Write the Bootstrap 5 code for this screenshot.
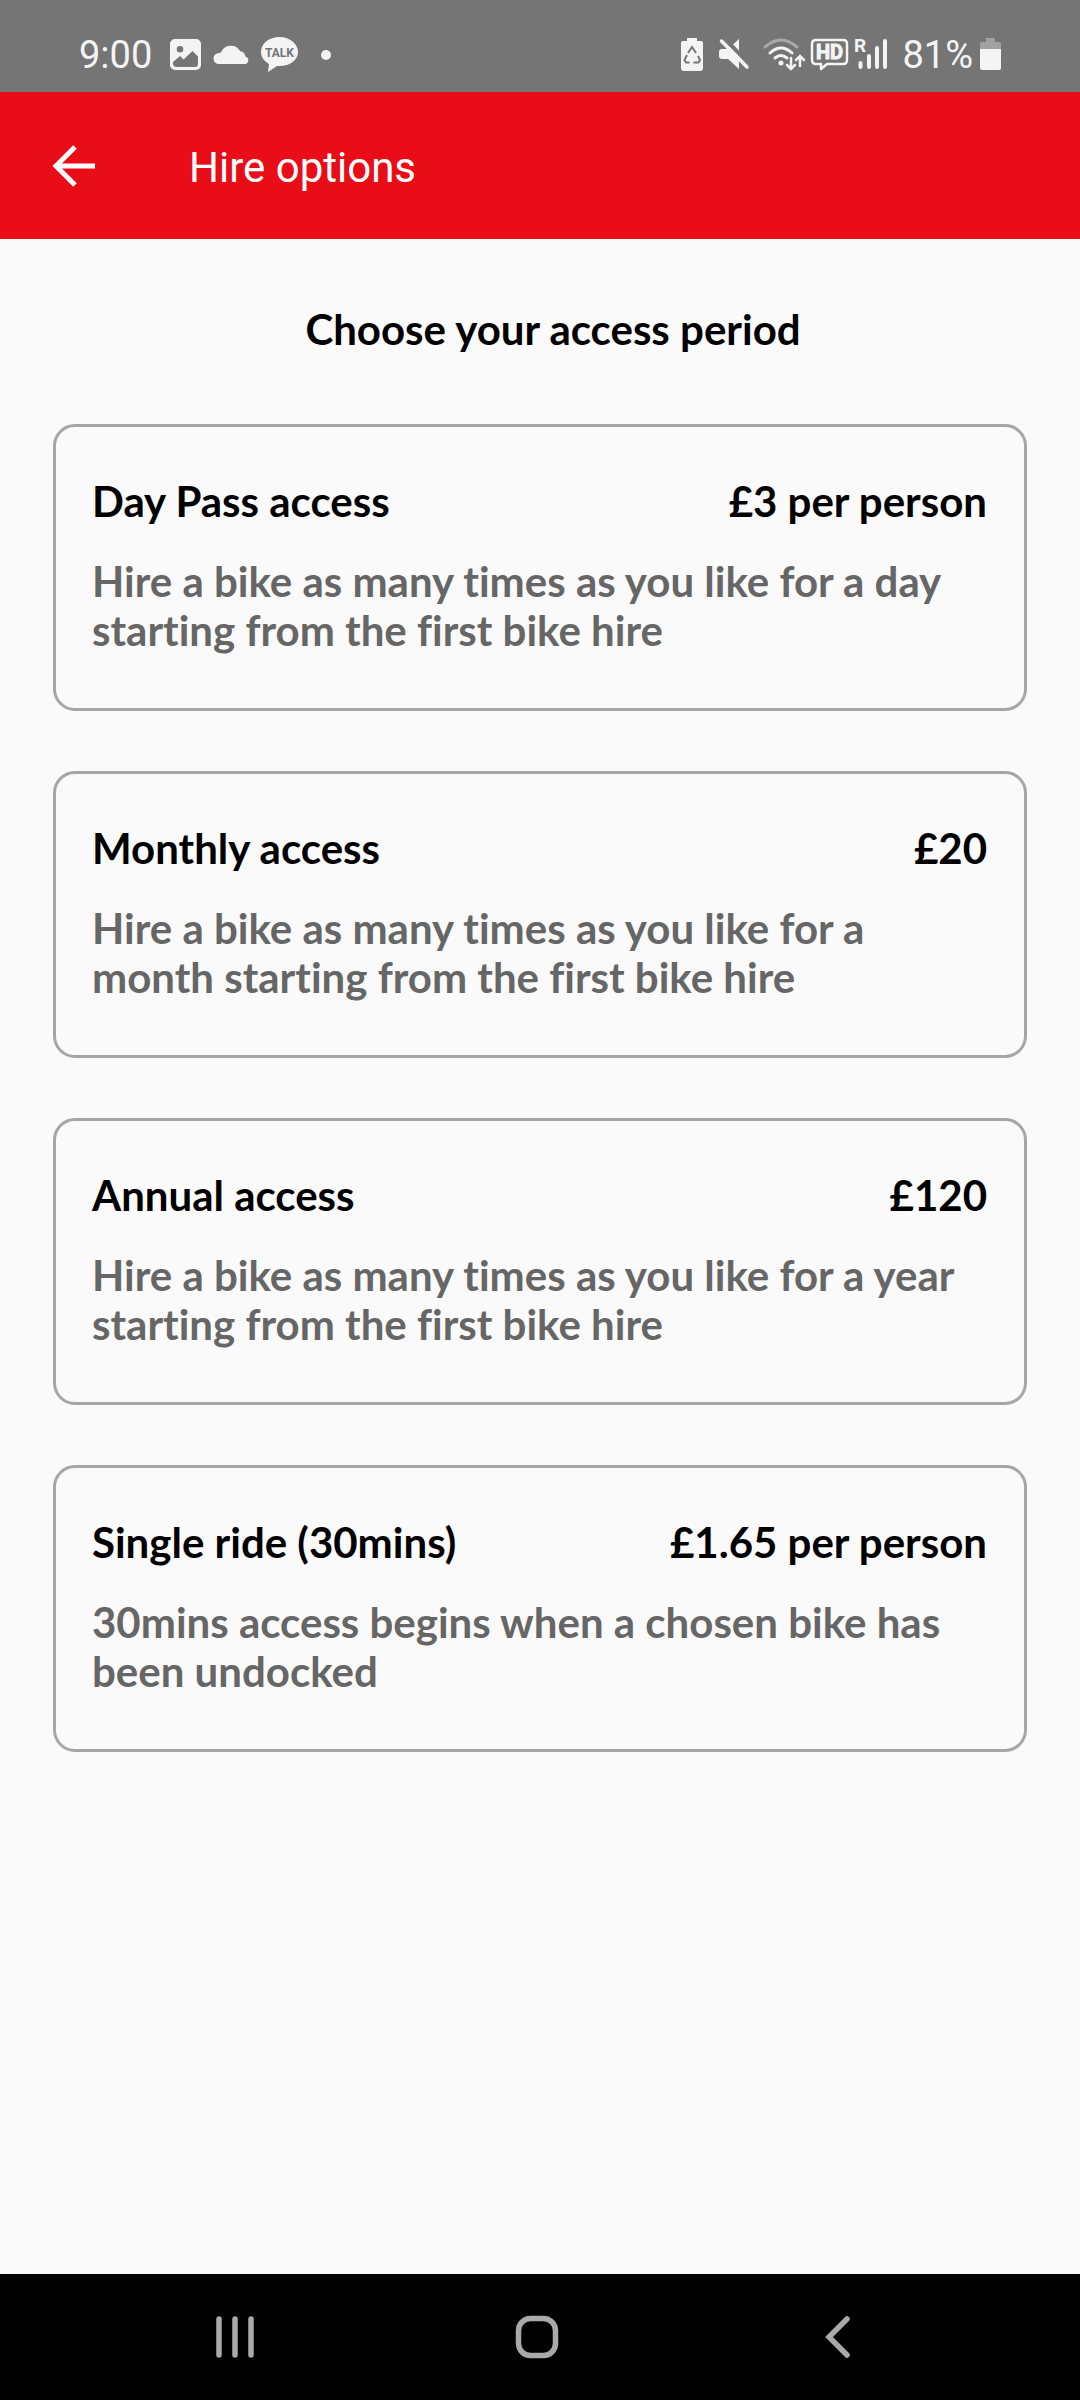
<!DOCTYPE html>
<html lang="en">
<head>
<meta charset="utf-8">
<meta name="viewport" content="width=device-width, initial-scale=1">
<title>Hire options</title>
<link href="https://cdn.jsdelivr.net/npm/bootstrap@5.3.0/dist/css/bootstrap.min.css" rel="stylesheet">
<style>
  body { background: #fafafa; color: #000; font-family: Lato, "Open Sans", sans-serif; font-size: 42px; line-height: 49px; }
  .status-strip { height: 92px; background: #757575; color: #f4f4f4; font: 38px/44px Roboto, sans-serif; padding: 18px 77px 0 79px; }
  .status-strip svg { height: 36px; fill: currentColor; display: block; overflow: visible; }
  .status-strip svg text { font-family: Roboto, sans-serif; font-weight: 700; }
  .status-time { margin-right: 10px; }
  .status-charge { margin: 0 5px 0 10px; }
  .app-header { height: 147px; background: #e90d18; padding: 0 44px; }
  .back-btn { width: 60px; height: 60px; margin-right: 85px; }
  .app-title { font: 42px/50px Roboto, sans-serif; color: #fff; padding-top: 4px; }
  .page-heading { font-size: 42px; line-height: 49px; font-weight: 700; padding: 66px 0 70px 26px; }
  .plans { padding: 0 53px; gap: 60px; }
  .plan { background: transparent; border: 3px solid #a6a6a6; border-radius: 22px; padding: 50px 37px 53px 36px; color: #000; text-align: left; font-variant-ligatures: none; }
  .plan-head { font-weight: 700; margin-bottom: 31px; }
  .plan-text { color: #666; font-weight: 700; }
  .nav-strip { height: 126px; background: #000; padding: 0 91px 0 84px; }
  .nav-strip svg { width: 44px; height: 44px; stroke: #a9a9a9; fill: none; }
</style>
</head>
<body>
<div class="d-flex flex-column min-vh-100">
  <div class="status-strip d-flex justify-content-between align-items-center">
    <div class="d-flex align-items-center">
      <span class="status-time">9:00</span>
      <svg width="47" viewBox="0 0 47 36"><path fill-rule="evenodd" d="M13 2h21a5 5 0 0 1 5 5v21a5 5 0 0 1-5 5H13a5 5 0 0 1-5-5V7a5 5 0 0 1 5-5zM18 9a3.300 3.300 0 1 0 0 6.600A3.300 3.300 0 1 0 18 9zM11 25l7-6 3.500 3.500 9-8.500 5.500 5.500v7.500q0 3-3 3H14q-3-.5-3-3.500z"/></svg>
      <svg width="47" viewBox="0 0 47 36"><path d="M10 27a5.500 5.500 0 0 1 0-11q1-.5 2-.5A10.500 10.500 0 0 1 31 14a7 7 0 0 1 5.500 5.500A4 4 0 0 1 37 27z"/></svg>
      <svg width="47" viewBox="0 0 47 36"><path d="M23.500 0C13 0 5 6.500 5 15c0 5 3 9 8 12l-1 8 9-6h2.500C34 29 42 23 42 15S34 0 23.500 0z"/><text x="23.500" y="19.500" font-size="12" text-anchor="middle" fill="#757575">TALK</text></svg>
      <svg width="47" viewBox="0 0 47 36"><circle cx="23" cy="18" r="5"/></svg>
    </div>
    <div class="d-flex align-items-center">
      <svg width="42" viewBox="0 0 42 36"><path d="M16 1h10v3h4q2 0 2 2v25q0 3-3 3H13q-3 0-3-3V6q0-2 2-2h4z"/><g fill="none" stroke="#757575" stroke-width="2"><path d="M17 16l4-6 4 6M27 19l2 4-1.500 2.500h-5M18.500 25.500H15L13.500 23l2.500-5"/></g></svg>
      <svg width="43" viewBox="0 0 43 36"><path d="M26 2v30L15 22H9q-3 0-3-3v-4q0-3 3-3h6z"/><path d="M11 1l27 28" stroke="#757575" stroke-width="4"/><path d="M8.500 4L34 30" stroke="#f4f4f4" stroke-width="3.500" stroke-linecap="round"/></svg>
      <svg width="52" viewBox="0 0 52 36"><g fill="none" stroke="#f4f4f4" stroke-width="3" stroke-linecap="round"><path d="M9 10q16-14 32 0" opacity=".4"/><path d="M14 16q11-10 22 0M19 21q6-5 12 0"/><path stroke-width="2.500" d="M35 21v11m-4-4l4 4 4-4M44 29V19m-4 4l4-4 4 4"/></g><circle cx="25" cy="26" r="2.500"/></svg>
      <svg width="42" viewBox="0 0 42 36"><path d="M8 3h27q4 0 4 4v16q0 4-4 4H19l-6 5v-5H8q-4 0-4-4V7q0-4 4-4z" fill="none" stroke="#f4f4f4" stroke-width="2.500" stroke-linejoin="round"/><text x="21.500" y="22" font-size="20" text-anchor="middle" stroke="#f4f4f4">HD</text></svg>
      <svg width="42" viewBox="0 0 42 36"><text x="4" y="15" font-size="19">R</text><path d="M10.500 26v4M19 19v11M27 11v19M35 4v26" fill="none" stroke="#f4f4f4" stroke-width="4" stroke-linecap="round"/></svg>
      <span class="status-charge">81%</span>
      <svg width="25" viewBox="0 0 25 36"><path opacity=".35" d="M8 1h9v4h4q2 0 2 2v6H2V7q0-2 2-2h4z"/><path d="M2 12h21v19q0 2-2 2H4q-2 0-2-2z"/></svg>
    </div>
  </div>

  <header class="app-header d-flex align-items-center">
    <button type="button" class="back-btn btn p-0 border-0 d-flex align-items-center justify-content-center" aria-label="Back">
      <svg width="44" height="44" viewBox="0 0 44 44" fill="none" stroke="#fff" stroke-width="5"><path d="M23 3L4 22l19 19M4 22h39"/></svg>
    </button>
    <h1 class="app-title m-0">Hire options</h1>
  </header>

  <main class="flex-grow-1">
    <h2 class="page-heading text-center m-0">Choose your access period</h2>
    <div class="plans d-flex flex-column">
      <button type="button" class="plan">
        <span class="plan-head d-flex justify-content-between"><span>Day Pass access</span><span>£3 per person</span></span>
        <span class="plan-text d-block">Hire a bike as many times as you like for a day<br>starting from the first bike hire</span>
      </button>
      <button type="button" class="plan">
        <span class="plan-head d-flex justify-content-between"><span>Monthly access</span><span>£20</span></span>
        <span class="plan-text d-block">Hire a bike as many times as you like for a<br>month starting from the first bike hire</span>
      </button>
      <button type="button" class="plan">
        <span class="plan-head d-flex justify-content-between"><span>Annual access</span><span>£120</span></span>
        <span class="plan-text d-block">Hire a bike as many times as you like for a year<br>starting from the first bike hire</span>
      </button>
      <button type="button" class="plan">
        <span class="plan-head d-flex justify-content-between"><span>Single ride (30mins)</span><span>£1.65 per person</span></span>
        <span class="plan-text d-block">30mins access begins when a chosen bike has<br>been undocked</span>
      </button>
    </div>
  </main>

  <nav class="nav-strip d-flex align-items-center" aria-label="System">
    <button type="button" class="btn p-0 border-0 flex-fill" aria-label="Recent apps"><svg class="d-block mx-auto" viewBox="0 0 44 44" stroke-width="5.500" stroke-linecap="round"><path d="M6 4v36M22 4v36M38 4v36"/></svg></button>
    <button type="button" class="btn p-0 border-0 flex-fill" aria-label="Home"><svg class="d-block mx-auto" viewBox="0 0 44 44" stroke-width="5.500"><rect x="3.500" y="3.500" width="37" height="37" rx="12"/></svg></button>
    <button type="button" class="btn p-0 border-0 flex-fill" aria-label="Back"><svg class="d-block mx-auto" viewBox="0 0 44 44" stroke-width="5.500" stroke-linecap="round"><path d="M31 4L13 22l18 18"/></svg></button>
  </nav>
</div>
<script src="https://cdn.jsdelivr.net/npm/bootstrap@5.3.0/dist/js/bootstrap.bundle.min.js"></script>
</body>
</html>
